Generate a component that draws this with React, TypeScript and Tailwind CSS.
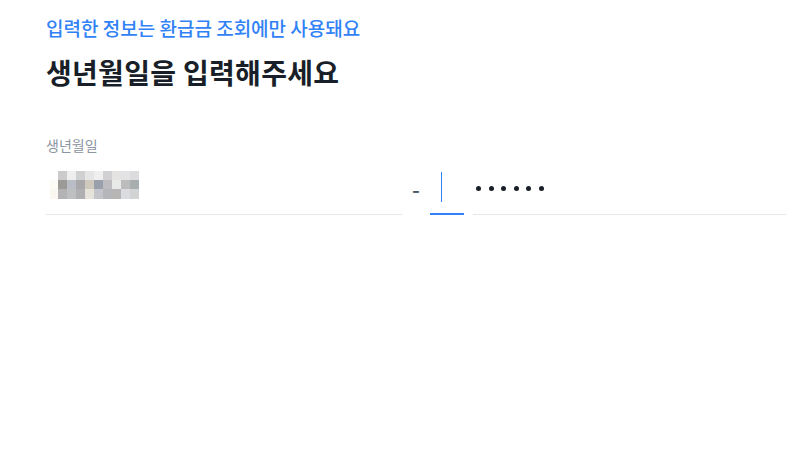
const mosaic: string[][] = [
  ["#ffffff", "#cbcbcb", "#eeeeee", "#cfd0d2", "#e5e5e5", "#efefef", "#d0d0d2", "#e5e3e1", "#e3e3e5", "#dcdcde"],
  ["#fcfaf5", "#9b9a97", "#b9bec6", "#a8a8aa", "#cfc8bd", "#9aa0ab", "#bebcbe", "#e8e9e9", "#bcbcbc", "#a8adaf"],
  ["#f9f7f0", "#b3b3b5", "#bebfc1", "#b0b0b2", "#e6e3da", "#c3c5cb", "#b4b6ba", "#b7b6b4", "#dadcdf", "#d2d3d3"],
];

function BlurredValue() {
  return (
    <div className="ml-[4px] flex flex-col">
      {mosaic.map((row, r) => (
        <div key={r} className={`flex ${r === 2 ? "h-[10px]" : "h-[9px]"}`}>
          {row.map((c, i) => (
            <div
              key={i}
              className={i === 0 ? "w-[8px]" : "w-[9px]"}
              style={{ backgroundColor: c }}
            />
          ))}
        </div>
      ))}
    </div>
  );
}

export default function App() {
  return (
    <div
      className="w-[812px] h-[468px] bg-white pl-[46px] pr-[26px] pt-[16px]"
      style={{ fontFamily: '"Noto Sans CJK KR", "Noto Sans", sans-serif' }}
    >
      <p className="text-[19px] leading-[24px] font-medium text-[#3182f6]">
        입력한 정보는 환급금 조회에만 사용돼요
      </p>
      <h1 className="mt-[14px] text-[28px] leading-[36px] font-bold tracking-[0.3px] text-[#191f28]">
        생년월일을 입력해주세요
      </h1>

      <label className="mt-[46px] block text-[14px] leading-[18px] text-[#8b95a1]">
        생년월일
      </label>

      <div className="flex items-stretch">
        <div className="w-[356px] h-[61px] border-b border-[#e5e8eb] pt-[17px]">
          <BlurredValue />
        </div>

        <div className="w-[28px] h-[61px] flex items-center justify-center pt-[8px] text-[22px] font-medium text-[#4e5968]">
          -
        </div>

        <div className="w-[34px] h-[61px] border-b-2 border-[#3182f6] pt-[18px] pl-[11px]">
          <div className="w-[1px] h-[30px] bg-[#3182f6]" />
        </div>

        <div className="ml-[9px] flex-1 h-[61px] border-b border-[#e5e8eb] pt-[8px] pl-[3px] flex items-center gap-[7.5px]">
          {Array.from({ length: 6 }).map((_, i) => (
            <span key={i} className="w-[5px] h-[5px] rounded-full bg-[#191f28]" />
          ))}
        </div>
      </div>
    </div>
  );
}
